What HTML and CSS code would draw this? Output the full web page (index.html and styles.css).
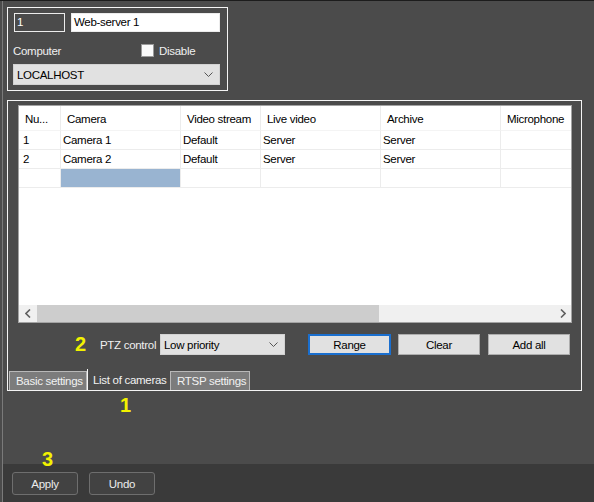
FILE: index.html
```html
<!DOCTYPE html>
<html lang="en">
<head>
  <meta charset="UTF-8">
  <title>Web-server settings</title>
  <link rel="stylesheet" href="styles.css">
</head>
<body>
  <div class="window">
    <div class="main">
      <div class="box box-server">
        <div class="field-row">
          <div class="field field-id">1</div>
          <div class="field field-name">Web-server 1</div>
        </div>
        <div class="computer-row">
          <span>Computer</span>
          <label class="check"><span class="check-box"></span>Disable</label>
        </div>
        <div class="select select-computer">
          <span>LOCALHOST</span>
          <svg class="chevron" width="9" height="6" viewBox="0 0 9 6"><polyline points="0.5,0.5 4.5,4.5 8.5,0.5" fill="none" stroke="#555" stroke-width="1"/></svg>
        </div>
      </div>

      <div class="box box-cameras">
        <div class="grid">
          <div class="grid-body">
            <div class="grid-row grid-head">
              <div class="cell cell-num">Nu...</div>
              <div class="cell">Camera</div>
              <div class="cell">Video stream</div>
              <div class="cell">Live video</div>
              <div class="cell">Archive</div>
              <div class="cell">Microphone</div>
            </div>
            <div class="grid-row">
              <div class="cell cell-num">1</div>
              <div class="cell">Camera 1</div>
              <div class="cell">Default</div>
              <div class="cell">Server</div>
              <div class="cell">Server</div>
              <div class="cell"></div>
            </div>
            <div class="grid-row">
              <div class="cell cell-num">2</div>
              <div class="cell">Camera 2</div>
              <div class="cell">Default</div>
              <div class="cell">Server</div>
              <div class="cell">Server</div>
              <div class="cell"></div>
            </div>
            <div class="grid-row">
              <div class="cell cell-num"></div>
              <div class="cell cell-selected"></div>
              <div class="cell"></div>
              <div class="cell"></div>
              <div class="cell"></div>
              <div class="cell"></div>
            </div>
          </div>
          <div class="hscroll">
            <div class="scroll-btn">
              <svg width="6" height="9" viewBox="0 0 6 9"><polyline points="5,0.5 1,4.5 5,8.5" fill="none" stroke="#606060" stroke-width="1.6"/></svg>
            </div>
            <div class="scroll-track"><div class="scroll-thumb"></div></div>
            <div class="scroll-btn">
              <svg width="6" height="9" viewBox="0 0 6 9"><polyline points="1,0.5 5,4.5 1,8.5" fill="none" stroke="#606060" stroke-width="1.6"/></svg>
            </div>
          </div>
        </div>

        <div class="ptz-row">
          <span class="note note-2">2</span>
          <span class="ptz-label">PTZ control</span>
          <div class="select select-ptz">
            <span>Low priority</span>
            <svg class="chevron" width="9" height="6" viewBox="0 0 9 6"><polyline points="0.5,0.5 4.5,4.5 8.5,0.5" fill="none" stroke="#555" stroke-width="1"/></svg>
          </div>
          <button type="button" class="btn btn-range">Range</button>
          <button type="button" class="btn btn-clear">Clear</button>
          <button type="button" class="btn btn-add">Add all</button>
        </div>

        <div class="tabs">
          <div class="tab tab-basic">Basic settings</div>
          <div class="tab tab-active">List of cameras</div>
          <div class="tab tab-rtsp">RTSP settings</div>
        </div>
      </div>
    </div>

    <span class="note note-1">1</span>
    <span class="note note-3">3</span>

    <div class="footer">
      <button type="button" class="dark-btn">Apply</button>
      <button type="button" class="dark-btn">Undo</button>
    </div>
  </div>
</body>
</html>
```

FILE: styles.css
```css
* {
  box-sizing: border-box;
}
body {
  margin: 0;
  padding-left: 2px;
  border-top: 1px solid #1c1c1c;
  background-color: #4b4b4b;
  font-family: "Liberation Sans", Arial, sans-serif;
  font-size: 11.5px;
  letter-spacing: -0.3px;
  color: #f2f2f2;
  overflow: hidden;
  white-space: nowrap;
}
.window {
  position: relative;
  height: 501px;
  border-left: 1px solid #7a7a7a;
  display: flex;
  flex-direction: column;
}
.main {
  flex: 1;
  padding: 6px 0 0 4px;
}
.box {
  border: 1px solid #f4f4f4;
}

/* server box */
.box-server {
  width: 221px;
  height: 84px;
  padding: 5px 0 0 6px;
}
.field-row {
  display: flex;
  gap: 6px;
}
.field {
  height: 19px;
  line-height: 17px;
  border: 1px solid #ececec;
  padding-left: 2px;
}
.field-id {
  width: 51px;
  color: #fff;
}
.field-name {
  width: 149px;
  background: #fff;
  color: #000;
}
.computer-row {
  display: grid;
  grid-template-columns: 128px auto;
  align-items: center;
  height: 13px;
  margin: 12px 0 0 -1px;
  color: #f0f0f0;
}
.check {
  display: flex;
  align-items: center;
  gap: 5px;
}
.check-box {
  width: 13px;
  height: 13px;
  background: #fafafa;
  border: 1px solid #9a9a9a;
}
.select {
  display: flex;
  align-items: center;
  justify-content: space-between;
  height: 21px;
  background: #e1e1e1;
  border: 1px solid #d2d2d2;
  color: #000;
  padding: 0 6px 0 3px;
}
.select-computer {
  width: 207px;
  margin: 7px 0 0 -1px;
}

/* cameras box */
.box-cameras {
  width: 575px;
  height: 291px;
  margin-top: 9px;
  padding: 4px 0 0 10px;
  display: flex;
  flex-direction: column;
}
.grid {
  width: 554px;
  height: 218px;
  border: 1px solid #a3a3a3;
  background: #fff;
  color: #000;
  display: flex;
  flex-direction: column;
  overflow: hidden;
}
.grid-body {
  flex: 1;
  overflow: hidden;
}
.grid-row {
  display: grid;
  grid-template-columns: 42px 120px 80px 120px 120px 100px;
  height: 19px;
}
.grid-head {
  height: 25px;
}
.cell {
  border-right: 1px solid #ececec;
  border-bottom: 1px solid #ececec;
  padding-left: 2px;
  line-height: 18px;
  overflow: hidden;
}
.cell-num {
  padding-left: 4px;
}
.grid-head .cell {
  padding: 2px 0 0 6px;
  line-height: 22px;
  border-bottom-color: #f4f4f4;
}
.cell-selected {
  background: #99b4d1;
}
.hscroll {
  display: flex;
  height: 17px;
  background: #f0f0f0;
}
.scroll-btn {
  width: 17px;
  display: flex;
  align-items: center;
  justify-content: center;
}
.scroll-track {
  flex: 1;
  padding-left: 1px;
}
.scroll-thumb {
  width: 342px;
  height: 17px;
  background: #cdcdcd;
}

/* ptz row */
.ptz-row {
  display: flex;
  align-items: center;
  height: 21px;
  margin: 11px 0 0 57px;
}
.note {
  color: #f2f200;
  font-weight: bold;
  font-size: 20px;
  letter-spacing: 0;
}
.note-2 {
  width: 25px;
}
.note-1 {
  position: absolute;
  left: 117px;
  top: 393px;
}
.note-3 {
  position: absolute;
  left: 39px;
  top: 447px;
}
.ptz-label {
  width: 60px;
  color: #f0f0f0;
}
.select-ptz {
  width: 125px;
}
.btn {
  height: 21px;
  width: 82px;
  background: #e1e1e1;
  border: 1px solid #adadad;
  font-family: inherit;
  font-size: 11.5px;
  letter-spacing: -0.3px;
  color: #000;
  padding: 0;
}
.btn-range {
  width: 83px;
  margin-left: 23px;
  border: 2px solid #1a6fcf;
}
.btn-clear {
  margin-left: 7px;
}
.btn-add {
  margin-left: 8px;
}

/* tabs */
.tabs {
  display: flex;
  align-items: flex-end;
  margin: auto 0 0 -9px;
  height: 19px;
}
.tab {
  height: 19px;
  line-height: 18px;
  color: #f2f2f2;
  padding-left: 6px;
}
.tab-basic,
.tab-rtsp {
  background: #7c7c7c;
  border: 1px solid #b8b8b8;
  border-bottom: none;
}
.tab-basic {
  width: 78px;
}
.tab-active {
  width: 83px;
  height: 21px;
  line-height: 22px;
  border-left: 1px solid #f4f4f4;
  padding-left: 5px;
}
.tab-rtsp {
  width: 80px;
}

/* footer */
.footer {
  height: 38px;
  background: #3a3a3a;
  display: flex;
  gap: 11px;
  padding: 8px 0 0 9px;
}
.dark-btn {
  width: 66px;
  height: 23px;
  background: #424242;
  border: 1px solid #6e6e6e;
  border-radius: 3px;
  color: #ececec;
  font-family: inherit;
  font-size: 11.5px;
  letter-spacing: -0.3px;
}
```
